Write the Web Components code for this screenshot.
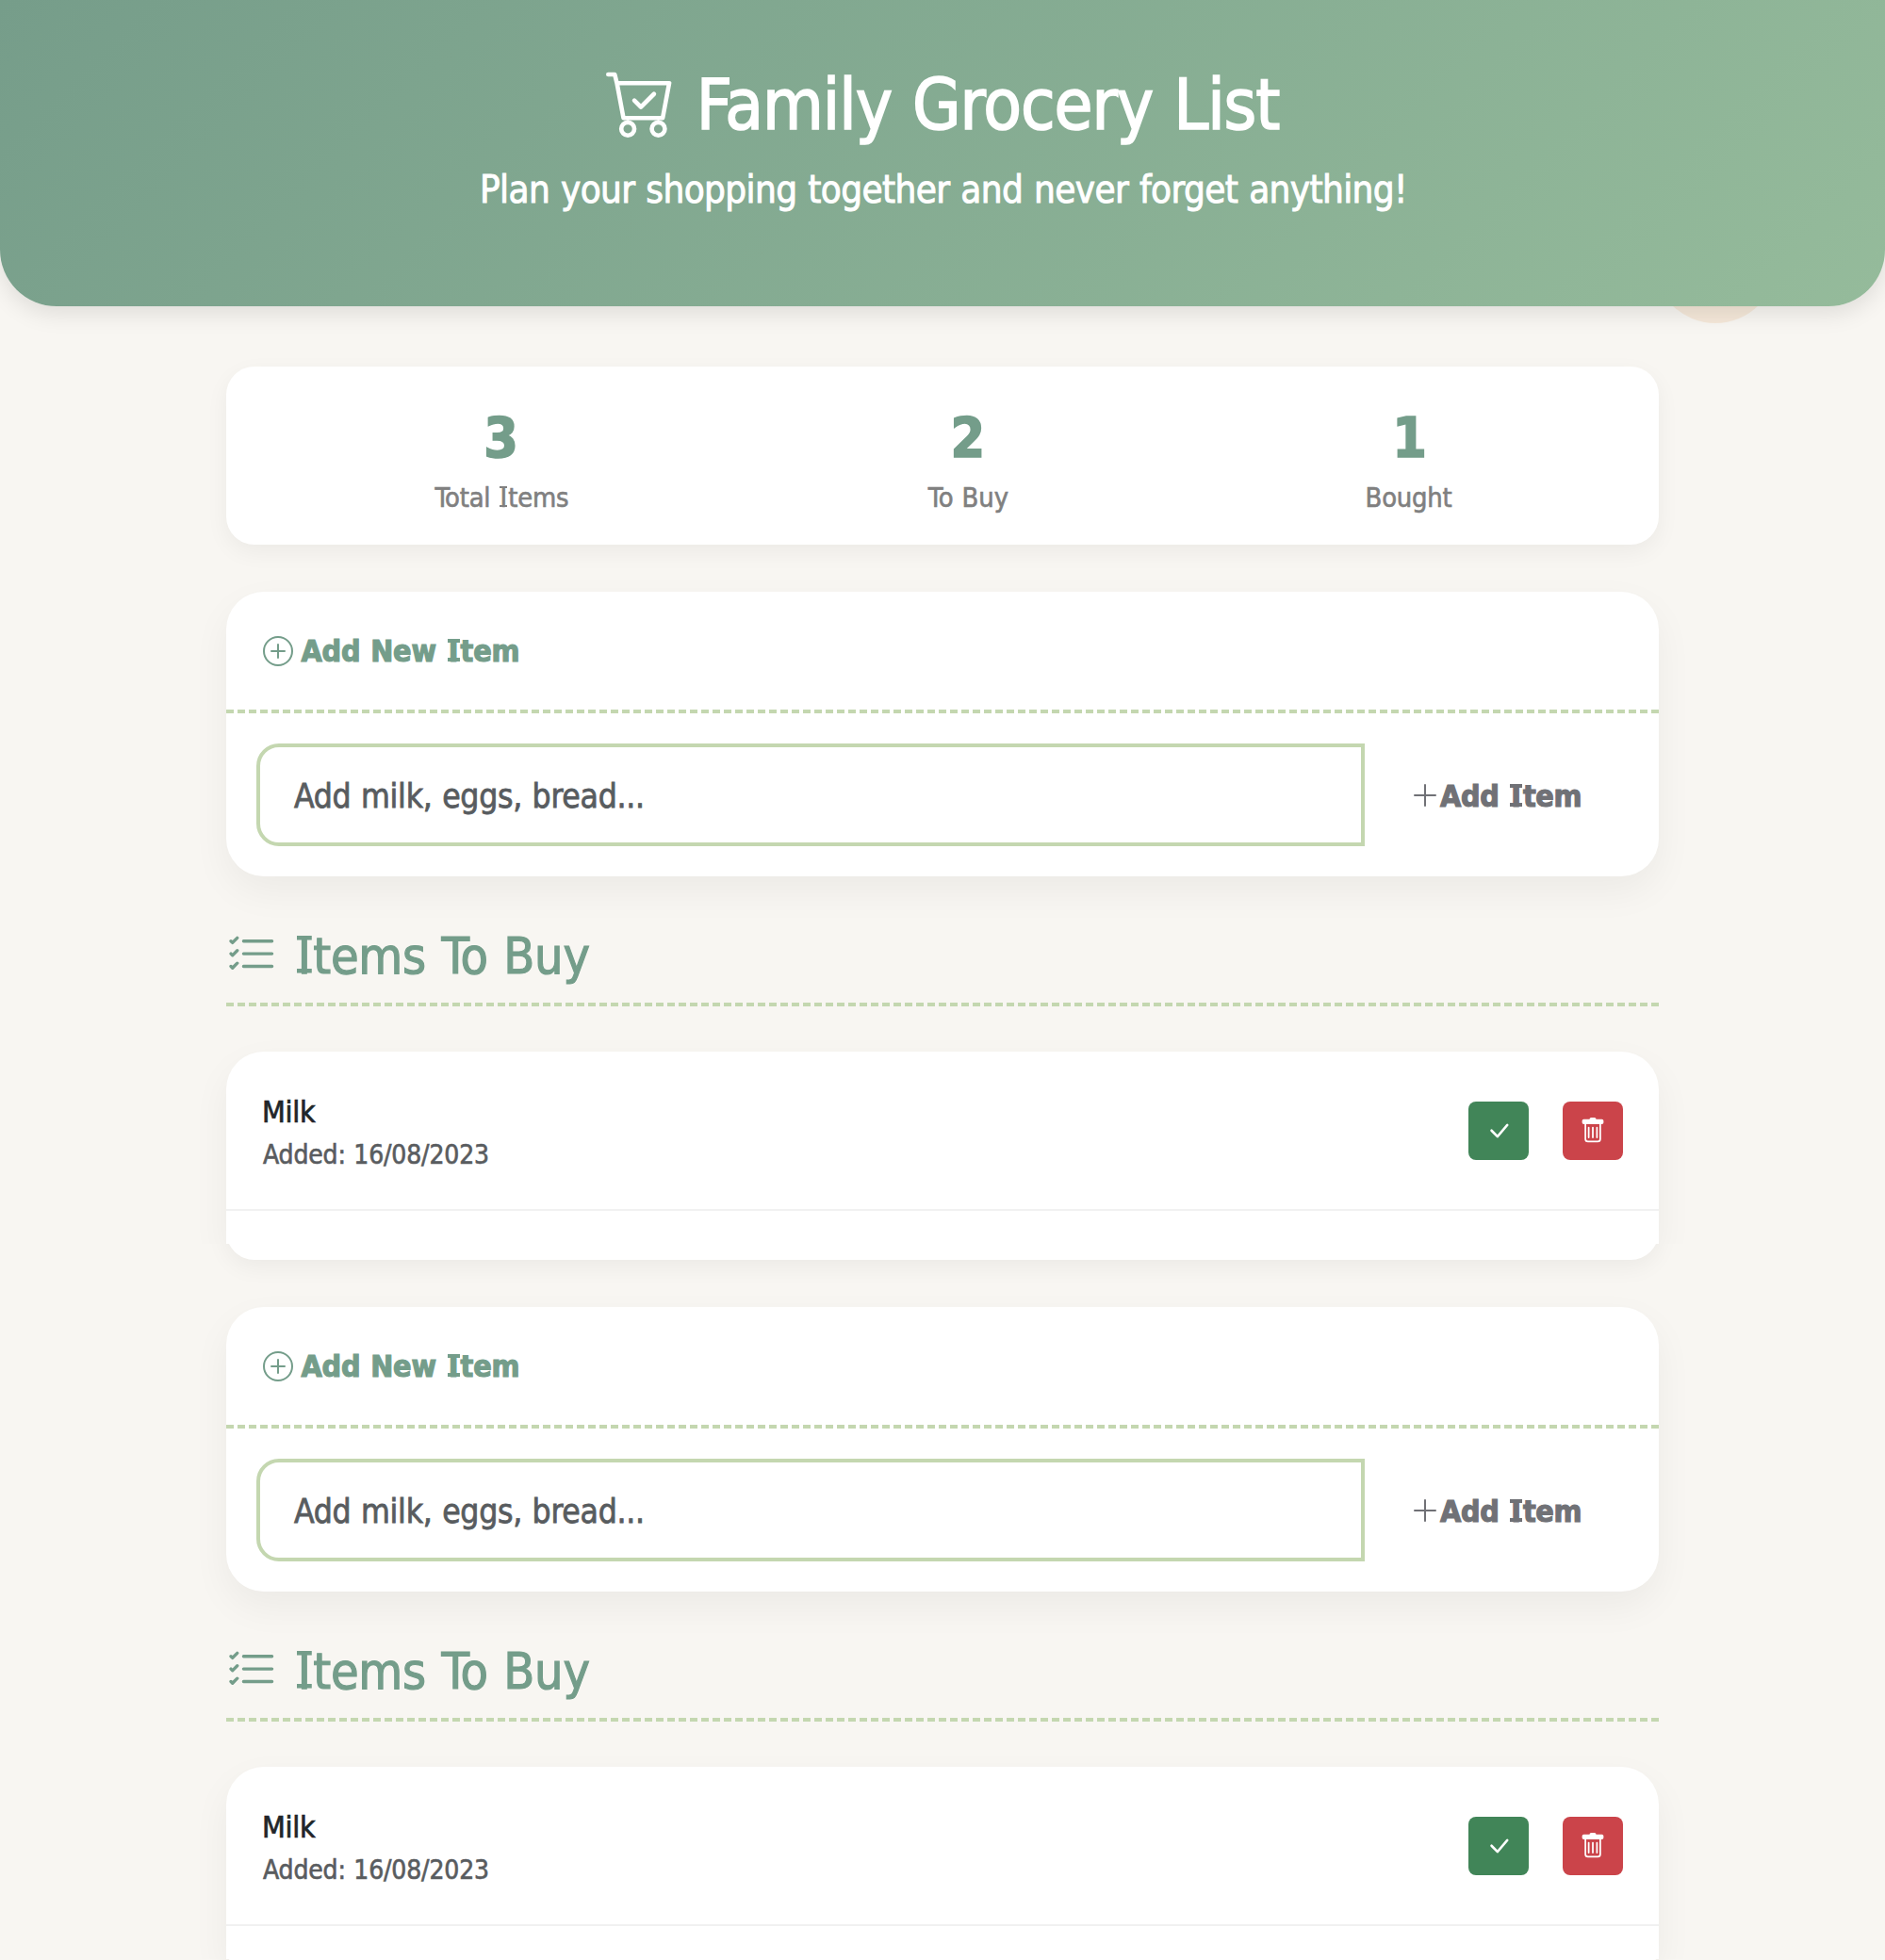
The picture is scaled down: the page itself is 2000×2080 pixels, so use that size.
<!DOCTYPE html>
<html lang="en">
<head>
<meta charset="utf-8">
<title>Family Grocery List</title>
<style>
html,body{margin:0;padding:0}
body{background:#f8f6f2;width:2000px;height:2080px;overflow:hidden;font-family:"DejaVu Sans Condensed","DejaVu Sans",sans-serif;
--sage:#749d8a;--leaf:#c4d7b0}
</style>
</head>
<body>
<grocery-app></grocery-app>
<script>
const ICONS={
cart:'<path d="M11.354 6.354a.5.5 0 0 0-.708-.708L8 8.293 6.854 7.146a.5.5 0 1 0-.708.708l1.5 1.5a.5.5 0 0 0 .708 0z"/><path d="M.5 1a.5.5 0 0 0 0 1h1.11l.401 1.607 1.498 7.985A.5.5 0 0 0 4 12h1a2 2 0 1 0 0 4 2 2 0 0 0 0-4h7a2 2 0 1 0 0 4 2 2 0 0 0 0-4h1a.5.5 0 0 0 .491-.408l1.5-8A.5.5 0 0 0 14.5 3H2.89l-.405-1.621A.5.5 0 0 0 2 1zm3.915 10L3.102 4h10.796l-1.313 7zM6 14a1 1 0 1 1-2 0 1 1 0 0 1 2 0m7 0a1 1 0 1 1-2 0 1 1 0 0 1 2 0"/>',
circle:'<path d="M8 15A7 7 0 1 1 8 1a7 7 0 0 1 0 14m0 1A8 8 0 1 0 8 0a8 8 0 0 0 0 16"/><path d="M8 4a.5.5 0 0 1 .5.5v3h3a.5.5 0 0 1 0 1h-3v3a.5.5 0 0 1-1 0v-3h-3a.5.5 0 0 1 0-1h3v-3A.5.5 0 0 1 8 4"/>',
plus:'<path d="M8 2a.5.5 0 0 1 .5.5v5h5a.5.5 0 0 1 0 1h-5v5a.5.5 0 0 1-1 0v-5h-5a.5.5 0 0 1 0-1h5v-5A.5.5 0 0 1 8 2"/>',
list:'<path d="M5 11.5a.5.5 0 0 1 .5-.5h9a.5.5 0 0 1 0 1h-9a.5.5 0 0 1-.5-.5m0-4a.5.5 0 0 1 .5-.5h9a.5.5 0 0 1 0 1h-9a.5.5 0 0 1-.5-.5m0-4a.5.5 0 0 1 .5-.5h9a.5.5 0 0 1 0 1h-9a.5.5 0 0 1-.5-.5M3.854 2.146a.5.5 0 0 1 0 .708l-1.5 1.5a.5.5 0 0 1-.708 0l-.5-.5a.5.5 0 1 1 .708-.708L2 3.293l1.146-1.147a.5.5 0 0 1 .708 0m0 4a.5.5 0 0 1 0 .708l-1.5 1.5a.5.5 0 0 1-.708 0l-.5-.5a.5.5 0 1 1 .708-.708L2 7.293l1.146-1.147a.5.5 0 0 1 .708 0m0 4a.5.5 0 0 1 0 .708l-1.5 1.5a.5.5 0 0 1-.708 0l-.5-.5a.5.5 0 0 1 .708-.708l.146.147 1.146-1.147a.5.5 0 0 1 .708 0"/>',
check:'<path d="M12.736 3.97a.733.733 0 0 1 1.047 0c.286.289.29.756.01 1.05L7.88 12.01a.733.733 0 0 1-1.065.02L3.217 8.384a.757.757 0 0 1 0-1.06.733.733 0 0 1 1.047 0l3.052 3.093 5.4-6.425z"/>',
trash:'<path d="M5.5 5.5A.5.5 0 0 1 6 6v6a.5.5 0 0 1-1 0V6a.5.5 0 0 1 .5-.5m2.5 0a.5.5 0 0 1 .5.5v6a.5.5 0 0 1-1 0V6a.5.5 0 0 1 .5-.5m3 .5a.5.5 0 0 0-1 0v6a.5.5 0 0 0 1 0z"/><path d="M14.5 3a1 1 0 0 1-1 1H13v9a2 2 0 0 1-2 2H5a2 2 0 0 1-2-2V4h-.5a1 1 0 0 1-1-1V2a1 1 0 0 1 1-1H6a1 1 0 0 1 1-1h2a1 1 0 0 1 1 1h3.5a1 1 0 0 1 1 1zM4.118 4 4 4.059V13a1 1 0 0 0 1 1h6a1 1 0 0 0 1-1V4.059L11.882 4z"/>'
};
const def=(name,render,after)=>customElements.define(name,class extends HTMLElement{
  connectedCallback(){
    if(this.shadowRoot)return;
    this.attachShadow({mode:'open'}).innerHTML=render(this);
    if(after)after(this);
  }
});
const a=(e,n)=>e.getAttribute(n)||'';

def('bi-icon',e=>`<style>:host{display:block;flex:none;width:${a(e,'size')}px;height:${a(e,'size')}px}svg{display:block}</style>
<svg width="${a(e,'size')}" height="${a(e,'size')}" viewBox="0 0 16 16" fill="currentColor">${ICONS[a(e,'name')]}</svg>`);

/* One line of text, tracked so that its glyphs span exactly the "ink" width. */
const ctx=document.createElement('canvas').getContext('2d');
def('fit-text',e=>`<style>:host{display:block;flex:none;white-space:nowrap;width:${a(e,'ink')}px}
#t{display:inline-block;word-spacing:.027em;-webkit-text-stroke:.022em currentColor}
:host([bold]) #t{-webkit-text-stroke-width:.035em}
.i{padding:0 .05em;--t:.085em;background:linear-gradient(currentColor,currentColor) 50% .19em/calc(100% - .06em) var(--t) no-repeat,linear-gradient(currentColor,currentColor) 50% calc(.938em - var(--t))/calc(100% - .06em) var(--t) no-repeat}
:host([bold]) .i{padding:0 .07em;--t:.125em}</style><span id="t">${a(e,'text').replace(/I/g,'<span class="i">I</span>')}</span>`,
e=>{
  const t=e.shadowRoot.getElementById('t'),s=getComputedStyle(e),fs=parseFloat(s.fontSize),str=a(e,'text');
  ctx.font=`${s.fontWeight} ${s.fontSize} ${s.fontFamily}`;
  const m=ctx.measureText(str);
  const left=str[0]==='I'?.03*fs:-m.actualBoundingBoxLeft, right=m.width-m.actualBoundingBoxRight;
  const nat=t.getBoundingClientRect().width-left-right;
  if(str.length>1)t.style.letterSpacing=((+a(e,'ink')-nat)/(str.length-1))+'px';
  t.style.marginLeft=-left+'px';
});

def('app-header',()=>`<style>:host{display:block;position:relative}
header{position:relative;box-sizing:border-box;height:325px;padding-top:67px;border-radius:0 0 60px 60px;color:#fff;background:linear-gradient(135deg,#769d8a,#95bb9b);box-shadow:0 8px 24px rgba(0,0,0,.1);display:flex;flex-direction:column;align-items:center;gap:15px}
.dot{position:absolute;right:115px;top:213px;width:130px;height:130px;border-radius:50%;background:#f5e8d9}
h1{margin:0;font-weight:400;font-size:74px;line-height:89px;display:flex;align-items:center;gap:28px}
bi-icon{margin-bottom:6px}
p{margin:0;font-size:40px;line-height:60px}</style>
<div class="dot"></div><header><h1><bi-icon name="cart" size="74"></bi-icon><fit-text ink="612.5" text="Family Grocery List"></fit-text></h1>
<p><fit-text ink="976" text="Plan your shopping together and never forget anything!"></fit-text></p></header>`);

def('stat-item',e=>`<style>:host{display:flex;flex-direction:column;align-items:center;gap:7px}
.n{font-weight:700;font-size:58.6px;line-height:69px;-webkit-text-stroke:1.6px currentColor;color:var(--sage)}.l{font-size:28.8px;line-height:43px;color:#808080}</style>
<div class="n">${a(e,'value')}</div><div class="l"><fit-text ink="${a(e,'ink')}" text="${a(e,'label')}"></fit-text></div>`);

def('stats-card',()=>`<style>:host{display:flex;justify-content:space-around;box-sizing:border-box;height:189px;padding:42px 29px 0 30px;background:#fff;border-radius:30px;box-shadow:0 8px 24px rgba(0,0,0,.05)}</style><slot></slot>`);

def('add-card',()=>`<style>:host{display:block;background:#fff;border-radius:40px;box-shadow:0 16px 40px rgba(0,0,0,.05)}
.head{display:flex;align-items:center;gap:9px;height:125px;padding-left:38.5px;border-bottom:4px dashed var(--leaf);color:var(--sage);font-weight:700;font-size:32px;line-height:48px}
.body{display:flex;padding:32px}
.input{box-sizing:border-box;width:1176px;height:109px;border:4px solid var(--leaf);border-radius:24px 0 0 24px;display:flex;align-items:center;padding:2px 0 0 36px;font-size:35.2px;color:#585c5f}
.btn{display:flex;align-items:center;padding-left:48px;font-size:32px;font-weight:700;color:#707176}
.btn fit-text{padding-top:2px}.btn bi-icon{margin-top:1px}</style>
<div class="head"><bi-icon name="circle" size="32"></bi-icon><fit-text bold ink="230" text="Add New Item"></fit-text></div>
<div class="body"><div class="input"><fit-text ink="369" text="Add milk, eggs, bread..."></fit-text></div>
<div class="btn"><bi-icon name="plus" size="32"></bi-icon><fit-text bold ink="148.5" text="Add Item"></fit-text></div></div>`);

def('section-title',()=>`<style>:host{display:flex;align-items:center;gap:21px;box-sizing:border-box;height:86px;margin:52px 0 48px;padding-bottom:17px;border-bottom:4px dashed var(--leaf);color:var(--sage);font-size:53.6px;line-height:64px}bi-icon{margin-bottom:2px}</style>
<bi-icon name="list" size="53.6"></bi-icon><fit-text ink="310.8" text="Items To Buy"></fit-text>`);

def('item-card',()=>`<style>:host{display:block;height:204px;background:#fff;border-radius:40px 40px 0 0;box-shadow:0 16px 40px rgba(0,0,0,.05);clip-path:inset(-60px -60px 0 -60px)}
.row{display:flex;justify-content:space-between;box-sizing:border-box;height:169px;padding:40px 38px 0 39px;border-bottom:2px solid #f1f1f1}
.name{font-size:32px;line-height:48px;padding-left:1px;color:#212529}.date{font-size:28px;line-height:42px;padding-top:1px;color:#595c5f}
.acts{display:flex;gap:36px;padding-top:13px}
.b{width:64px;height:62px;border-radius:8px;display:flex;align-items:center;justify-content:center;color:#fff}
.ok{background:#418558}.del{background:#cb444a}</style>
<div class="row"><div><div class="name"><fit-text ink="55" text="Milk"></fit-text></div><div class="date"><fit-text ink="239" text="Added: 16/08/2023"></fit-text></div></div>
<div class="acts"><div class="b ok"><bi-icon name="check" size="28"></bi-icon></div><div class="b del"><bi-icon name="trash" size="28"></bi-icon></div></div></div>`);

def('card-foot',()=>`<style>:host{display:block;height:17px;margin-bottom:50px;clip-path:inset(0 -60px -60px -60px)}
div{height:80px;margin-top:-63px;background:#fff;border-radius:30px;box-shadow:0 8px 24px rgba(0,0,0,.05)}:host{display:flow-root}</style><div></div>`);

def('grocery-app',()=>`<style>:host{display:block;height:2080px;overflow:hidden}main{display:block;width:1520px;margin:64px auto 0}stats-card{margin-bottom:50px}</style>
<app-header></app-header>
<main><stats-card><stat-item value="3" label="Total Items" ink="142.6"></stat-item><stat-item value="2" label="To Buy" ink="86"></stat-item><stat-item value="1" label="Bought" ink="90"></stat-item></stats-card>
<add-card></add-card><section-title></section-title><item-card></item-card><card-foot></card-foot>
<add-card></add-card><section-title></section-title><item-card></item-card><card-foot></card-foot></main>`);
</script>
</body>
</html>
